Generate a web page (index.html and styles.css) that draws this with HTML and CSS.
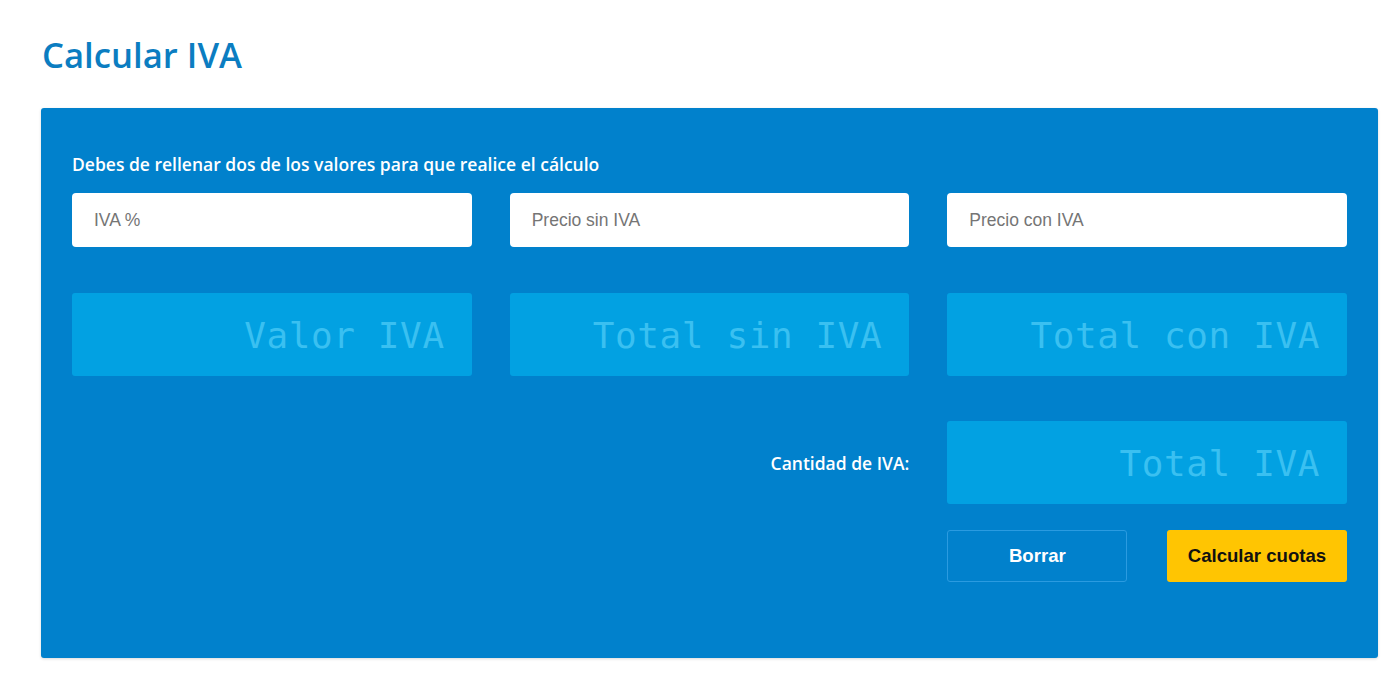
FILE: index.html
```html
<!DOCTYPE html>
<html lang="es">
<head>
<meta charset="utf-8">
<title>Calcular IVA</title>
<link rel="stylesheet" href="styles.css">
</head>
<body>
<main class="page">
  <h1 class="title">Calcular IVA</h1>
  <section class="panel">
    <p class="hint">Debes de rellenar dos de los valores para que realice el cálculo</p>
    <div class="grid">
      <input class="field" type="text" placeholder="IVA %">
      <input class="field" type="text" placeholder="Precio sin IVA">
      <input class="field" type="text" placeholder="Precio con IVA">

      <div class="out">Valor IVA</div>
      <div class="out">Total sin IVA</div>
      <div class="out">Total con IVA</div>

      <div class="spacer"></div>
      <div class="out-label">Cantidad de IVA:</div>
      <div class="out">Total IVA</div>

      <div class="spacer"></div>
      <div class="spacer"></div>
      <div class="buttons">
        <button class="btn btn-clear" type="button">Borrar</button>
        <button class="btn btn-calc" type="button">Calcular cuotas</button>
      </div>
    </div>
  </section>
</main>
</body>
</html>
```
FILE: styles.css
```css
* { box-sizing: border-box; }
html, body { margin: 0; background: #fff; }
body { font-family: "Open Sans", "Liberation Sans", sans-serif; }
.page { padding: 30px 16px 19px 41px; }
.title {
  margin: 0 0 28px 1px;
  font-size: 34.7px;
  line-height: 50px;
  font-weight: 600;
  color: #0b7dc1;
}
.panel {
  background: #0181cc;
  border-radius: 3px;
  padding: 45px 31px 76px 31px;
  box-shadow: 0 1px 3px rgba(0,0,0,0.15);
}
.hint {
  margin: 0 0 18px 0;
  color: #fff;
  font-weight: 600;
  font-size: 17.5px;
  line-height: 22px;
}
.grid {
  display: grid;
  grid-template-columns: repeat(3, 1fr);
  column-gap: 38px;
  row-gap: 46px;
}
.field {
  height: 54px;
  border: none;
  border-radius: 4px;
  background: #fff;
  padding: 0 22px;
  font-family: "Liberation Sans", Arial, sans-serif;
  font-size: 17.5px;
  color: #333;
  width: 100%;
}
.field::placeholder { color: #757575; }
.out {
  height: 83px;
  background: #02a1e2;
  border-radius: 3px;
  color: #3ac0f1;
  font-family: "DejaVu Sans Mono", "Liberation Mono", monospace;
  font-size: 36px;
  display: flex;
  align-items: center;
  justify-content: flex-end;
  padding: 2px 27px 0 0;
  letter-spacing: 0.6px;
}
.out-label {
  display: flex;
  align-items: center;
  justify-content: flex-end;
  color: #fff;
  font-weight: 600;
  font-size: 17.5px;
}
.grid > .spacer:nth-child(7),
.grid > .out-label,
.grid > .out:nth-child(9) { margin-top: -1px; }
.buttons {
  display: grid;
  grid-template-columns: 180px 180px;
  justify-content: space-between;
  margin-top: -20px;
}
.btn {
  height: 52px;
  border-radius: 3px;
  font-family: "Liberation Sans", Arial, sans-serif;
  font-weight: 700;
  font-size: 18.6px;
  cursor: pointer;
}
.btn-clear {
  background: transparent;
  border: 1px solid #2b9be0;
  color: #fff;
}
.btn-calc {
  background: #ffc502;
  border: none;
  color: #111;
}
```
